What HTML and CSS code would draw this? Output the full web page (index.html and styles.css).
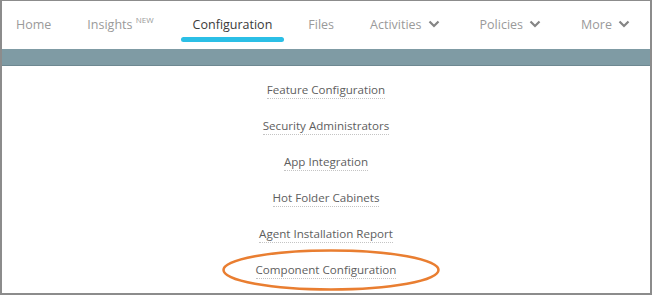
FILE: index.html
```html
<!DOCTYPE html>
<html lang="en">
<head>
    <meta charset="UTF-8">
    <title>Configuration</title>
    <link rel="stylesheet" href="styles.css">
</head>
<body>
    <div class="frame">
        <nav class="topnav">
            <a class="nav-item">Home</a>
            <a class="nav-item insights">Insights <sup>NEW</sup></a>
            <a class="nav-item active">Configuration</a>
            <a class="nav-item">Files</a>
            <a class="nav-item dropdown">Activities<svg class="chev" viewBox="0 0 12 8"><path d="M1.5 1.5 L6 6 L10.5 1.5"/></svg></a>
            <a class="nav-item dropdown">Policies<svg class="chev" viewBox="0 0 12 8"><path d="M1.5 1.5 L6 6 L10.5 1.5"/></svg></a>
            <a class="nav-item">More<svg class="chev" viewBox="0 0 12 8"><path d="M1.5 1.5 L6 6 L10.5 1.5"/></svg></a>
        </nav>
        <div class="band"></div>
        <ul class="menu">
            <li><a>Feature Configuration</a></li>
            <li><a>Security Administrators</a></li>
            <li><a>App Integration</a></li>
            <li><a>Hot Folder Cabinets</a></li>
            <li><a>Agent Installation Report</a></li>
            <li class="marked">
                <a>Component Configuration</a>
                <svg class="ring" viewBox="0 0 220 44"><ellipse cx="110" cy="22" rx="107.5" ry="19.5"/></svg>
            </li>
        </ul>
    </div>
</body>
</html>
```

FILE: styles.css
```css
body {
    margin: 0;
    background-color: white;
    font-family: "Open Sans", Arial, sans-serif;
}
.frame {
    box-sizing: border-box;
    width: 652px;
    height: 295px;
    border: 2px solid #8c8c8c;
    border-top-width: 1px;
    background-color: white;
}
.topnav {
    display: flex;
    align-items: flex-start;
    height: 48px;
    padding-left: 14px;
    gap: 36px;
}
.nav-item {
    display: block;
    padding-top: 15px;
    font-size: 12.5px;
    line-height: 18px;
    color: #9a9a9a;
    white-space: nowrap;
}
.nav-item.insights {
    margin-right: 3px;
}
.nav-item.dropdown {
    margin-right: 4px;
}
.nav-item sup {
    font-size: 8px;
    line-height: 0;
    vertical-align: 0;
    position: relative;
    top: -6px;
}
.nav-item.active {
    color: #3a3a3a;
}
.nav-item.active::after {
    content: "";
    display: block;
    height: 5px;
    margin: 3px -12px 0;
    border-radius: 3px;
    background-color: #2bbfe6;
}
.chev {
    width: 12px;
    height: 8px;
    margin-left: 6px;
    vertical-align: 1px;
}
.chev path {
    fill: none;
    stroke: #858585;
    stroke-width: 2.2;
}
.band {
    height: 16px;
    background-color: #7f9ba4;
    border-bottom: 1px solid #6e8891;
}
.menu {
    list-style: none;
    margin: 0;
    padding: 6px 0 0;
    text-align: center;
}
.menu li {
    position: relative;
    height: 36px;
    line-height: 36px;
    font-size: 11.6px;
}
.menu a {
    color: #5e5e5e;
    border-bottom: 1px dotted #c4c4c4;
    padding-bottom: 1px;
}
.ring {
    position: absolute;
    left: 219px;
    top: -4px;
    width: 220px;
    height: 44px;
}
.ring ellipse {
    fill: none;
    stroke: #e97e31;
    stroke-width: 2.5;
}
```
